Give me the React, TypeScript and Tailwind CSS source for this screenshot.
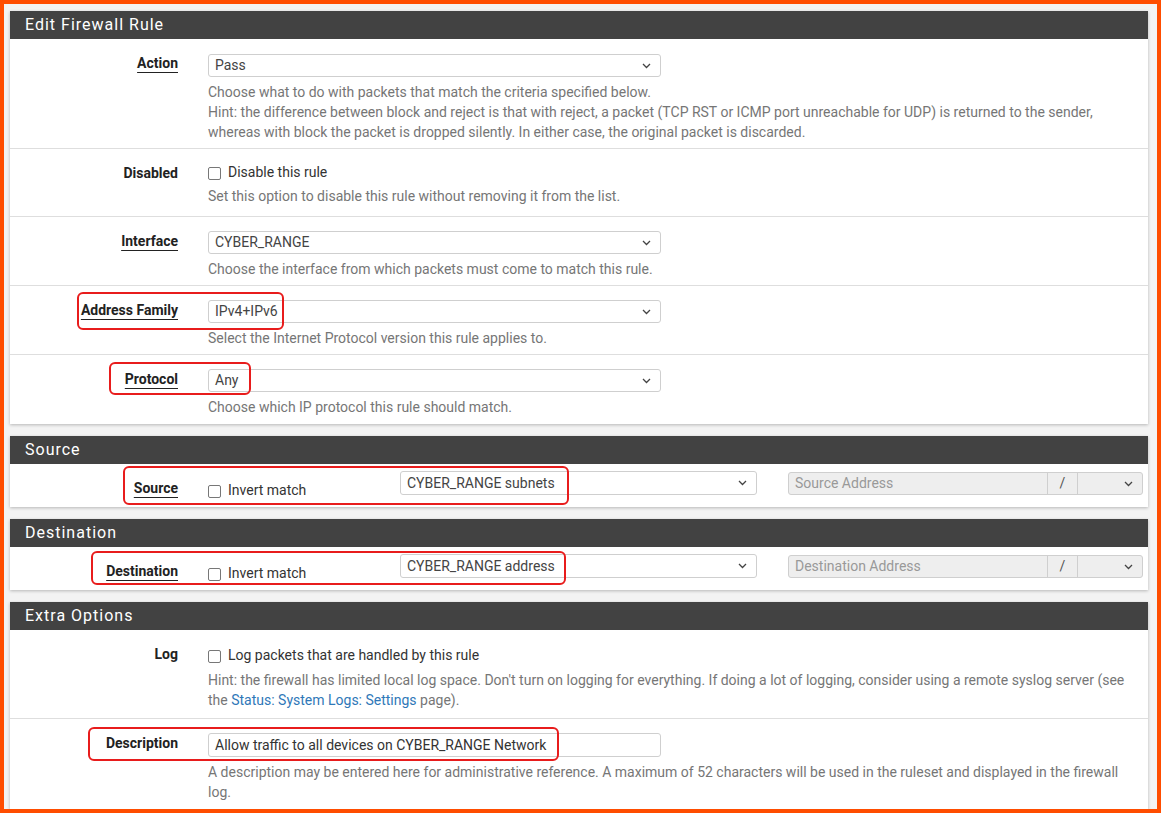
import React from "react";

const Chevron = () => (
  <svg width="9" height="6" viewBox="0 0 9 6" className="shrink-0">
    <path d="M1 1l3.5 3.5L8 1" fill="none" stroke="#444" strokeWidth="1.3" />
  </svg>
);

const Select = ({ value, w = "w-[453px]", h = "h-[23px]" }: { value: string; w?: string; h?: string }) => (
  <div
    className={`${w} ${h} flex items-center justify-between rounded-[3px] border border-[#cfcfcf] bg-white pl-[6px] pr-[9px] text-[14px] text-[#444]`}
  >
    <span>{value}</span>
    <Chevron />
  </div>
);

const Checkbox = ({ text }: { text: string }) => (
  <label className="flex items-center gap-[7px] leading-5 text-[14px] text-[#333]">
    <span className="mt-[2px] block h-[13px] w-[13px] rounded-[2px] border border-[#777] bg-white" />
    <span>{text}</span>
  </label>
);

const Label = ({ text, req = false }: { text: string; req?: boolean }) => (
  <div className="w-[183px] shrink-0 pr-[15px] pt-[12px] text-right">
    <span
      className={`text-[14px] font-bold leading-5 text-[#222] ${req ? "underline underline-offset-[4px] decoration-1" : ""}`}
    >
      {text}
    </span>
  </div>
);

const Help = ({ children }: { children: React.ReactNode }) => (
  <div className="mt-[5px] text-[14px] leading-5 text-[#767676]">{children}</div>
);

const Header = ({ title }: { title: string }) => (
  <div className="flex h-[28px] items-center bg-[#424242] pl-[15px] text-[16px] font-normal tracking-[1px] text-white">
    {title}
  </div>
);

const Panel = ({ title, children }: { title: string; children: React.ReactNode }) => (
  <div className="bg-white shadow-[0_1px_3px_rgba(0,0,0,0.25)]">
    <Header title={title} />
    {children}
  </div>
);

const Row = ({ children, last = false }: { children: React.ReactNode; last?: boolean }) => (
  <div className={`flex ${last ? "" : "border-b border-[#dedede]"}`}>{children}</div>
);

const AddressGroup = ({ placeholder }: { placeholder: string }) => (
  <div className="flex h-[23px] w-[355px] rounded-[3px] border border-[#cfcfcf] bg-[#eee] text-[14px] text-[#999]">
    <div className="flex flex-1 items-center pl-[6px]">{placeholder}</div>
    <div className="flex w-[31px] items-center justify-center border-x border-[#cfcfcf] text-[#555]">/</div>
    <div className="flex w-[64px] items-center justify-end pr-[9px]">
      <Chevron />
    </div>
  </div>
);

const RedBox = ({ cls }: { cls: string }) => (
  <div className={`pointer-events-none absolute rounded-[6px] border-2 border-[#e81c1c] ${cls}`} />
);

export default function App() {
  return (
    <div
      className="relative h-[813px] w-[1161px] overflow-hidden border-4 border-[#ff4d00] bg-[#f3f3f3] pl-[6px] pr-[9px] pt-[7px]"
      style={{ fontFamily: "Roboto, 'Liberation Sans', sans-serif" }}
    >
      <div className="flex flex-col gap-[12px]">
        <Panel title="Edit Firewall Rule">
          <Row>
            <Label text="Action" req />
            <div className="flex-1 px-[15px] pb-[6px] pt-[15px]">
              <Select value="Pass" />
              <Help>
                Choose what to do with packets that match the criteria specified below.
                <br />
                Hint: the difference between block and reject is that with reject, a packet (TCP RST or ICMP port unreachable for UDP) is returned to the sender,
                <br />
                whereas with block the packet is dropped silently. In either case, the original packet is discarded.
              </Help>
            </div>
          </Row>
          <Row>
            <Label text="Disabled" />
            <div className="flex-1 px-[15px] pb-[10px] pt-[13px]">
              <Checkbox text="Disable this rule" />
              <div className="mt-[4px] text-[14px] leading-5 text-[#767676]">
                Set this option to disable this rule without removing it from the list.
              </div>
            </div>
          </Row>
          <Row>
            <Label text="Interface" req />
            <div className="flex-1 px-[15px] pb-[6px] pt-[14px]">
              <Select value="CYBER_RANGE" />
              <Help>Choose the interface from which packets must come to match this rule.</Help>
            </div>
          </Row>
          <Row>
            <Label text="Address Family" req />
            <div className="flex-1 px-[15px] pb-[6px] pt-[14px]">
              <Select value="IPv4+IPv6" />
              <Help>Select the Internet Protocol version this rule applies to.</Help>
            </div>
          </Row>
          <Row last>
            <Label text="Protocol" req />
            <div className="flex-1 px-[15px] pb-[7px] pt-[14px]">
              <Select value="Any" />
              <Help>Choose which IP protocol this rule should match.</Help>
            </div>
          </Row>
        </Panel>

        <Panel title="Source">
          <Row last>
            <Label text="Source" req />
            <div className="flex h-[43px] flex-1">
              <div className="w-[192px] shrink-0 pl-[15px] pt-[16px]">
                <Checkbox text="Invert match" />
              </div>
              <div className="w-[387px] shrink-0 px-[15px] pt-[7px]">
                <Select value="CYBER_RANGE subnets" w="w-[357px]" h="h-[24px]" />
              </div>
              <div className="pl-[16px] pt-[8px]">
                <AddressGroup placeholder="Source Address" />
              </div>
            </div>
          </Row>
        </Panel>

        <Panel title="Destination">
          <Row last>
            <Label text="Destination" req />
            <div className="flex h-[43px] flex-1">
              <div className="w-[192px] shrink-0 pl-[15px] pt-[16px]">
                <Checkbox text="Invert match" />
              </div>
              <div className="w-[387px] shrink-0 px-[15px] pt-[7px]">
                <Select value="CYBER_RANGE address" w="w-[357px]" h="h-[24px]" />
              </div>
              <div className="pl-[16px] pt-[8px]">
                <AddressGroup placeholder="Destination Address" />
              </div>
            </div>
          </Row>
        </Panel>

        <Panel title="Extra Options">
          <Row>
            <Label text="Log" />
            <div className="flex-1 px-[15px] pb-[8px] pt-[15px]">
              <Checkbox text="Log packets that are handled by this rule" />
              <div className="mt-[5px] text-[14px] leading-5 text-[#767676]">
                Hint: the firewall has limited local log space. Don't turn on logging for everything. If doing a lot of logging, consider using a remote syslog server (see
                <br />
                the <span className="text-[#2f78b8]">Status: System Logs: Settings</span> page).
              </div>
            </div>
          </Row>
          <Row last>
            <Label text="Description" />
            <div className="flex-1 px-[15px] pb-[8px] pt-[14px]">
              <div className="flex h-[24px] w-[453px] items-center rounded-[3px] border border-[#cfcfcf] bg-white pl-[6px] text-[14px] text-[#333]">
                Allow traffic to all devices on CYBER_RANGE Network
              </div>
              <Help>
                A description may be entered here for administrative reference. A maximum of 52 characters will be used in the ruleset and displayed in the firewall
                <br />
                log.
              </Help>
            </div>
          </Row>
        </Panel>
      </div>

      <RedBox cls="left-[73px] top-[288px] h-[38px] w-[207px]" />
      <RedBox cls="left-[105px] top-[358px] h-[33px] w-[142px]" />
      <RedBox cls="left-[119px] top-[462px] h-[39px] w-[446px]" />
      <RedBox cls="left-[87px] top-[547px] h-[34px] w-[475px]" />
      <RedBox cls="left-[84px] top-[723px] h-[34px] w-[471px]" />
    </div>
  );
}
